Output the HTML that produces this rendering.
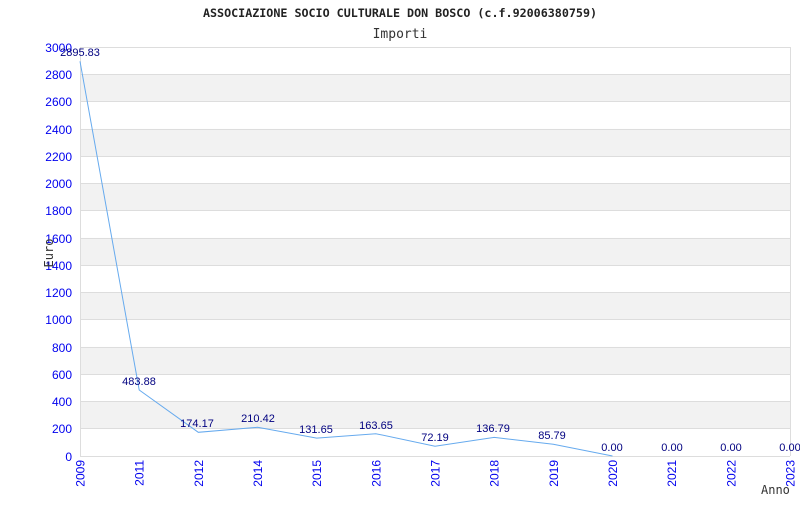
<!DOCTYPE html>
<html><head><style>body{margin:0;background:#fff}</style></head><body>
<svg width="800" height="500" xmlns="http://www.w3.org/2000/svg" font-family="Liberation Sans, sans-serif">
<rect width="800" height="500" fill="#fff"/>
<text x="400" y="17" text-anchor="middle" font-family="DejaVu Sans Mono, monospace" font-size="11.7" font-weight="bold" fill="#222">ASSOCIAZIONE SOCIO CULTURALE DON BOSCO (c.f.92006380759)</text>
<text x="400" y="38" text-anchor="middle" font-family="DejaVu Sans Mono, monospace" font-size="13" fill="#333">Importi</text>
<g fill="#f2f2f2">
<rect x="80" y="74.3" width="710" height="27.3"/><rect x="80" y="128.9" width="710" height="27.3"/><rect x="80" y="183.4" width="710" height="27.3"/><rect x="80" y="237.9" width="710" height="27.3"/><rect x="80" y="292.4" width="710" height="27.3"/><rect x="80" y="346.9" width="710" height="27.3"/><rect x="80" y="401.5" width="710" height="27.3"/>
</g>
<g stroke="#ddd" stroke-width="1">
<line x1="80" x2="790" y1="47.5" y2="47.5"/><line x1="80" x2="790" y1="74.5" y2="74.5"/><line x1="80" x2="790" y1="101.5" y2="101.5"/><line x1="80" x2="790" y1="129.5" y2="129.5"/><line x1="80" x2="790" y1="156.5" y2="156.5"/><line x1="80" x2="790" y1="183.5" y2="183.5"/><line x1="80" x2="790" y1="210.5" y2="210.5"/><line x1="80" x2="790" y1="238.5" y2="238.5"/><line x1="80" x2="790" y1="265.5" y2="265.5"/><line x1="80" x2="790" y1="292.5" y2="292.5"/><line x1="80" x2="790" y1="319.5" y2="319.5"/><line x1="80" x2="790" y1="347.5" y2="347.5"/><line x1="80" x2="790" y1="374.5" y2="374.5"/><line x1="80" x2="790" y1="401.5" y2="401.5"/><line x1="80" x2="790" y1="428.5" y2="428.5"/><line x1="80" x2="790" y1="456.5" y2="456.5"/>
<line x1="80.5" x2="80.5" y1="47" y2="456"/><line x1="790.5" x2="790.5" y1="47" y2="456"/>
</g>
<g fill="#0000ee" font-size="12" text-anchor="end">
<text x="72" y="52">3000</text><text x="72" y="79">2800</text><text x="72" y="106">2600</text><text x="72" y="134">2400</text><text x="72" y="161">2200</text><text x="72" y="188">2000</text><text x="72" y="215">1800</text><text x="72" y="243">1600</text><text x="72" y="270">1400</text><text x="72" y="297">1200</text><text x="72" y="324">1000</text><text x="72" y="352">800</text><text x="72" y="379">600</text><text x="72" y="406">400</text><text x="72" y="433">200</text><text x="72" y="461">0</text>
</g>
<text transform="translate(53,253) rotate(-90)" text-anchor="middle" font-family="DejaVu Sans Mono, monospace" font-size="12" fill="#333">Euro</text>
<g fill="#0000ee" font-size="12" text-anchor="end">
<text transform="translate(84.5,460) rotate(-90)">2009</text><text transform="translate(143.7,460) rotate(-90)">2011</text><text transform="translate(202.8,460) rotate(-90)">2012</text><text transform="translate(262,460) rotate(-90)">2014</text><text transform="translate(321.2,460) rotate(-90)">2015</text><text transform="translate(380.3,460) rotate(-90)">2016</text><text transform="translate(439.5,460) rotate(-90)">2017</text><text transform="translate(498.7,460) rotate(-90)">2018</text><text transform="translate(557.8,460) rotate(-90)">2019</text><text transform="translate(617,460) rotate(-90)">2020</text><text transform="translate(676.2,460) rotate(-90)">2021</text><text transform="translate(735.3,460) rotate(-90)">2022</text><text transform="translate(794.5,460) rotate(-90)">2023</text>
</g>
<text x="761" y="494" font-family="DejaVu Sans Mono, monospace" font-size="12" fill="#333">Anno</text>
<polyline fill="none" stroke="#66aaee" stroke-width="1" points="80,61.3 139.2,390 198.3,432.3 257.5,427.3 316.7,438.1 375.8,433.7 435,446.2 494.2,437.4 553.3,444.3 612.5,456"/>
<g fill="#000080" font-size="11" text-anchor="middle">
<text x="80" y="56">2895.83</text><text x="139" y="385">483.88</text><text x="197" y="427">174.17</text><text x="258" y="422">210.42</text><text x="316" y="433">131.65</text><text x="376" y="429">163.65</text><text x="435" y="441">72.19</text><text x="493" y="432">136.79</text><text x="552" y="439">85.79</text><text x="612" y="451">0.00</text><text x="672" y="451">0.00</text><text x="731" y="451">0.00</text><text x="790" y="451">0.00</text>
</g>
</svg>
</body></html>
